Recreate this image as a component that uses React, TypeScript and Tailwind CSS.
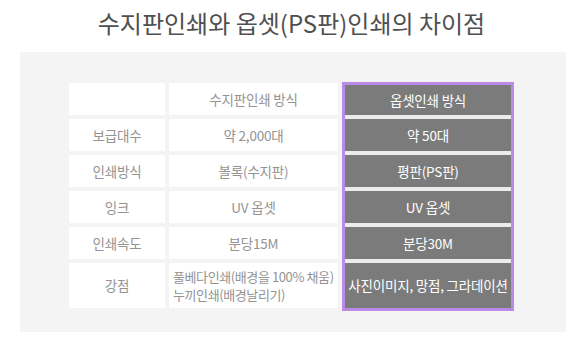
const rows = [
  { label: "", resin: "수지판인쇄 방식", offset: "옵셋인쇄 방식" },
  { label: "보급대수", resin: "약 2,000대", offset: "약 50대" },
  { label: "인쇄방식", resin: "볼록(수지판)", offset: "평판(PS판)" },
  { label: "잉크", resin: "UV 옵셋", offset: "UV 옵셋" },
  { label: "인쇄속도", resin: "분당15M", offset: "분당30M" },
];

const font = { fontFamily: '"Noto Sans CJK KR", "Noto Sans", sans-serif' };

export default function App() {
  return (
    <div className="w-[583px] h-[358px] bg-white overflow-hidden" style={font}>
      {/* Title */}
      <h1 className="h-[52px] flex items-center justify-center text-[24px] leading-none text-[#505050] pb-[6px]">
        수지판인쇄와 옵셋(PS판)인쇄의 차이점
      </h1>

      {/* Gray panel */}
      <div className="mx-[20px] w-[546px] h-[280px] bg-[#f4f4f4] pt-[30px] pl-[49px]">
        <div className="flex gap-[4px] text-[13.5px] tracking-[-0.2px]">
          {/* Label column */}
          <div className="w-[96px] flex flex-col gap-[4px] pt-[1px]">
            {rows.map((r, i) => (
              <div key={i} className="h-[32px] bg-white flex items-center justify-center text-[#939393]">
                {r.label}
              </div>
            ))}
            <div className="h-[45px] bg-white flex items-center justify-center text-[#939393]">강점</div>
          </div>

          {/* Resin plate column */}
          <div className="w-[169px] flex flex-col gap-[4px] pt-[1px]">
            {rows.map((r, i) => (
              <div key={i} className="h-[32px] bg-white flex items-center justify-center text-[#939393]">
                {r.resin}
              </div>
            ))}
            <div className="h-[45px] bg-white flex flex-col justify-center pl-[4px] text-[#939393] text-[13px] tracking-[-0.4px] leading-[18px]">
              <span>풀베다인쇄(배경을 100% 채움)</span>
              <span>누끼인쇄(배경날리기)</span>
            </div>
          </div>

          {/* Offset column, highlighted */}
          <div className="w-[172px] border-[3px] border-[#b98be6] bg-[#ececec] flex flex-col gap-[4px]">
            {rows.map((r, i) => (
              <div
                key={i}
                className={`${i === 0 ? "h-[30px]" : "h-[32px]"} bg-[#7b7b7b] flex items-center justify-center text-white`}
              >
                {r.offset}
              </div>
            ))}
            <div className="h-[45px] bg-[#7b7b7b] flex items-center justify-center text-white">
              사진이미지, 망점, 그라데이션
            </div>
          </div>
        </div>
      </div>
    </div>
  );
}
